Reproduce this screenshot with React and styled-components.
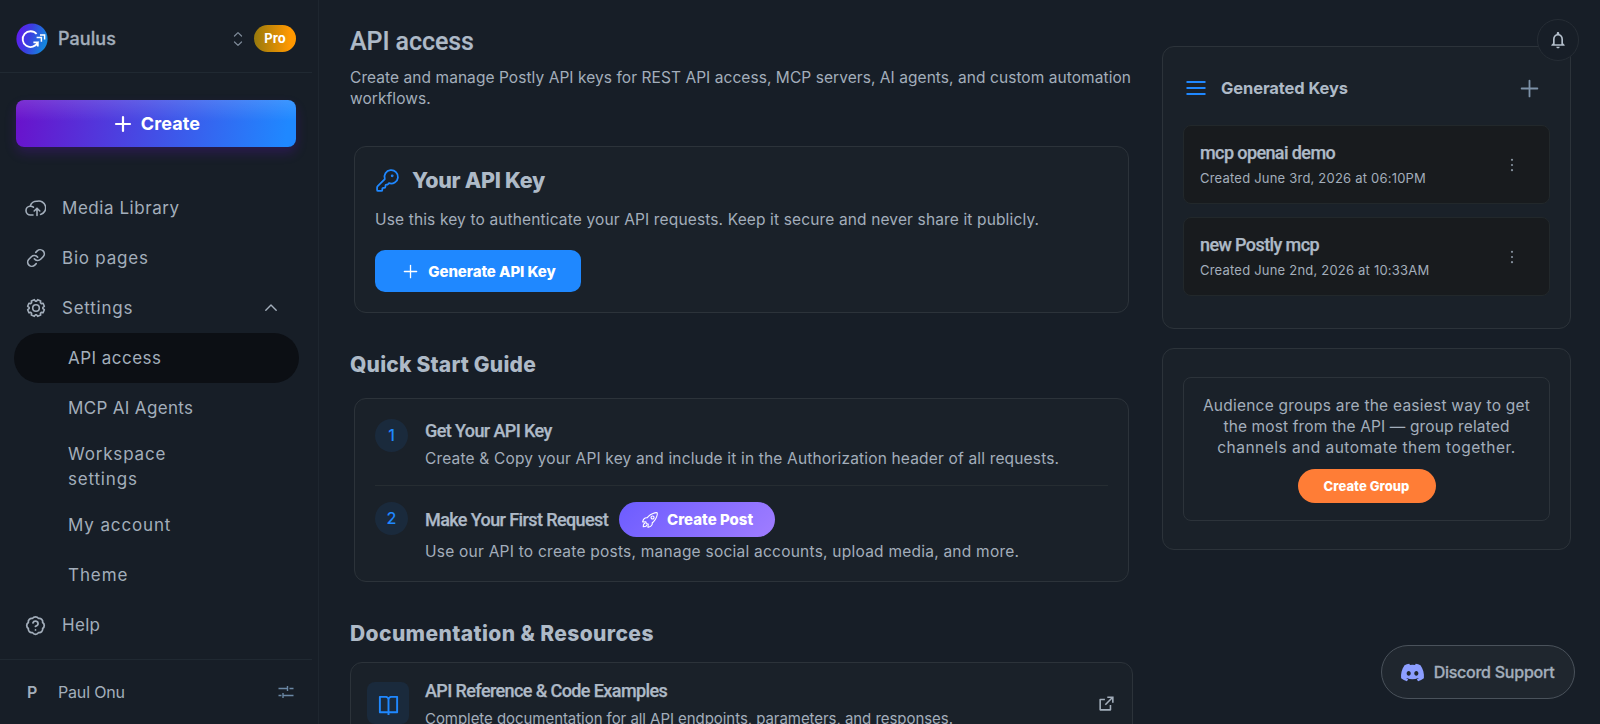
import React from 'react';
import styled, { createGlobalStyle, css } from 'styled-components';
import { Link, BadgeQuestionMark, KeyRound, Plus } from 'lucide-react';
import { IoRocketOutline } from 'react-icons/io5';
import { MdNotificationsNone } from 'react-icons/md';
import { RiBookOpenLine, RiExternalLinkLine } from 'react-icons/ri';
import { FaDiscord } from 'react-icons/fa';

const keys = [
    { name: 'mcp openai demo', created: 'Created June 3rd, 2026 at 06:10PM' },
    { name: 'new Postly mcp', created: 'Created June 2nd, 2026 at 10:33AM' },
];

const settingsLinks = [
    { label: 'API access', track: 0.47, active: true },
    { label: 'MCP AI Agents', track: 0.34 },
    { label: 'Workspace settings', track: 0.82, tall: true },
    { label: 'My account', track: 0.87 },
    { label: 'Theme', track: 0.92 },
];

// eight teeth, with a notch at the top
const gearPoints = [];
for (let i = 0; i < 8; i++) {
    [[-17, 6.9], [-11, 8.5], [11, 8.5], [17, 6.9]].forEach(([offset, r]) => {
        const a = (22.5 + i * 45 + offset) * Math.PI / 180;
        gearPoints.push(`${(10 + r * Math.sin(a)).toFixed(2)},${(10 - r * Math.cos(a)).toFixed(2)}`);
    });
}

const Logo = () => (
    <svg width="32" height="32" viewBox="0 0 32 32" fill="none">
        <defs>
            <linearGradient id="logo" x1="0" y1="0" x2="1" y2="0.3">
                <stop offset="0" stopColor="#6a12f2" />
                <stop offset="0.5" stopColor="#3a3fe0" />
                <stop offset="1" stopColor="#1584dc" />
            </linearGradient>
        </defs>
        <circle cx="16" cy="16" r="15.6" fill="url(#logo)" />
        <path d="M20.6 11A7.9 7.9 0 1 0 21.8 19.4H17.4M21.8 18.6v5" stroke="#fff" strokeWidth="1.8" />
        <path d="M24 12h4.6v4.6M20.6 14.4h4.8v4.4" stroke="#fff" strokeWidth="1.5" />
    </svg>
)

const Chevrons = () => (
    <svg width="10" height="16" viewBox="0 0 10 16" fill="none" stroke="#7d8997" strokeWidth="1.3" strokeLinecap="round" strokeLinejoin="round">
        <path d="M1.5 5 5 1.6 8.5 5M1.5 11 5 14.4 8.5 11" />
    </svg>
)

const ChevronUp = () => (
    <svg width="14" height="10" viewBox="0 0 14 10" fill="none" stroke="#a3aebb" strokeWidth="1.4" strokeLinecap="round" strokeLinejoin="round">
        <path d="M1.8 7.2 7 2 12.2 7.2" />
    </svg>
)

const CloudIcon = () => (
    <svg width="21" height="17" viewBox="0 0 21 17" fill="none" stroke="currentColor" strokeWidth="1.6" strokeLinecap="round" strokeLinejoin="round">
        <path d="M8 15H5.6A4.4 4.4 0 0 1 5.2 6.2 4.4 4.4 0 0 1 8.4 7.2" />
        <path d="M5.2 6.2A6.7 6.7 0 0 1 12.2 1.3 6.7 6.7 0 0 1 15.6 14.4" />
        <path d="M12 15.4V8.6M9.2 11 12 8.2 14.8 11" />
    </svg>
)

const GearIcon = () => (
    <svg width="20" height="20" viewBox="0 0 20 20" fill="none" stroke="currentColor" strokeWidth="1.6" strokeLinejoin="round">
        <polygon points={gearPoints.join(' ')} />
        <circle cx="10" cy="10" r="3.3" />
    </svg>
)

const Sliders = () => (
    <svg width="16" height="14" viewBox="0 0 16 14" fill="none" stroke="#6b88a5" strokeWidth="1.4">
        <path d="M0.5 3.5H9.5M9.5 1v5M11.5 3.5h4M0.5 10.5h3M5 8v5M5 10.5h10.5" />
    </svg>
)

const Bars = () => (
    <svg width="20" height="16" viewBox="0 0 20 16" stroke="#1f88ff" strokeWidth="1.8">
        <path d="M0.5 2h19M0.5 8h19M0.5 14h19" />
    </svg>
)

const Dots = () => (
    <svg width="4" height="14" viewBox="0 0 4 14" fill="#8793a0">
        <circle cx="2" cy="1.8" r="1.1" />
        <circle cx="2" cy="7" r="1.1" />
        <circle cx="2" cy="12.2" r="1.1" />
    </svg>
)

const Sidebar = () => (
    <SidebarContainer>
        <Workspace>
            <Logo />
            <WorkspaceName>Paulus</WorkspaceName>
            <Chevrons />
            <ProBadge>Pro</ProBadge>
        </Workspace>

        <CreateButton>
            <Plus size={24} strokeWidth={2.2} />
            Create
        </CreateButton>

        <Nav>
            <NavRow $track={0.55}><NavIcon><CloudIcon /></NavIcon>Media Library</NavRow>
            <NavRow $track={0.79}><NavIcon><Link size={20} strokeWidth={2} /></NavIcon>Bio pages</NavRow>
            <NavRow $track={0.77}>
                <NavIcon><GearIcon /></NavIcon>
                <NavLabel>Settings</NavLabel>
                <ChevronUp />
            </NavRow>

            {settingsLinks.map(link => (
                <SubRow key={link.label} $track={link.track} $active={link.active} $tall={link.tall}>
                    <SubLabel>{link.label}</SubLabel>
                </SubRow>
            ))}

            <NavRow $track={0.31}><NavIcon><BadgeQuestionMark size={21} strokeWidth={2} /></NavIcon>Help</NavRow>
        </Nav>

        <UserRow>
            <UserInitial>P</UserInitial>
            <UserName>Paul Onu</UserName>
            <Sliders />
        </UserRow>
    </SidebarContainer>
)

const Content = () => (
    <ContentContainer>
        <PageTitle>API access</PageTitle>
        <PageIntro $track={0.061}>
            Create and manage Postly API keys for REST API access, MCP servers, AI agents, and custom automation workflows.
        </PageIntro>

        <KeyCard>
            <CardHeading>
                <KeyRound size={25} strokeWidth={1.7} color="#1f88ff" />
                <CardTitle>Your API Key</CardTitle>
            </CardHeading>
            <Text $track={0.141}>
                Use this key to authenticate your API requests. Keep it secure and never share it publicly.
            </Text>
            <GenerateButton>
                <Plus size={21} strokeWidth={1.5} />
                Generate API Key
            </GenerateButton>
        </KeyCard>

        <SectionTitle $track={0.2}>Quick Start Guide</SectionTitle>

        <StepsCard>
            <Step>
                <StepNumber>1</StepNumber>
                <StepBody>
                    <StepHead>
                        <ItemTitle>Get Your API Key</ItemTitle>
                    </StepHead>
                    <Text $track={0.168}>
                        Create & Copy your API key and include it in the Authorization header of all requests.
                    </Text>
                </StepBody>
            </Step>
            <Step $last>
                <StepNumber>2</StepNumber>
                <StepBody>
                    <StepHead $tall>
                        <ItemTitle>Make Your First Request</ItemTitle>
                        <PostButton>
                            <IoRocketOutline size={18} />
                            Create Post
                        </PostButton>
                    </StepHead>
                    <Text $track={0.235}>
                        Use our API to create posts, manage social accounts, upload media, and more.
                    </Text>
                </StepBody>
            </Step>
        </StepsCard>

        <SectionTitle $track={0.4}>Documentation & Resources</SectionTitle>

        <DocCard>
            <DocIcon><RiBookOpenLine size={23} /></DocIcon>
            <DocBody>
                <ItemTitle>API Reference & Code Examples</ItemTitle>
                <DocText>Complete documentation for all API endpoints, parameters, and responses.</DocText>
            </DocBody>
            <DocLink><RiExternalLinkLine size={19} /></DocLink>
        </DocCard>
    </ContentContainer>
)

const Aside = () => (
    <AsideContainer>
        <KeysPanel>
            <PanelHeader>
                <Bars />
                <PanelTitle>Generated Keys</PanelTitle>
                <Plus size={27} strokeWidth={1.6} />
            </PanelHeader>
            {keys.map(key => (
                <KeyItem key={key.name}>
                    <KeyInfo>
                        <ItemTitle>{key.name}</ItemTitle>
                        <KeyDate>{key.created}</KeyDate>
                    </KeyInfo>
                    <Dots />
                </KeyItem>
            ))}
        </KeysPanel>

        <GroupPanel>
            <GroupBox>
                <GroupLine $track={0.236}>Audience groups are the easiest way to get</GroupLine>
                <GroupLine $track={0.134}>the most from the API — group related</GroupLine>
                <GroupLine $track={0.476}>channels and automate them together.</GroupLine>
                <GroupButton>Create Group</GroupButton>
            </GroupBox>
        </GroupPanel>
    </AsideContainer>
)

export default function App() {
    return (
        <>
            <GlobalStyle />
            <Page>
                <Sidebar />
                <Content />
                <Aside />
                <BellButton><MdNotificationsNone size={20} /></BellButton>
                <DiscordButton>
                    <FaDiscord size={25} color="#8c9eff" />
                    Discord Support
                </DiscordButton>
            </Page>
        </>
    )
}

const GlobalStyle = createGlobalStyle`
    * {
        box-sizing: border-box;
    }
    body {
        margin: 0;
        overflow: hidden;
        background-color: #171e27;
    }
    button {
        border: 0;
        font-family: inherit;
        color: white;
        display: flex;
        align-items: center;
        justify-content: center;
        padding: 0;
    }
    svg {
        flex-shrink: 0;
    }
`
const tracked = css`
    letter-spacing: ${p => p.$track || 0}px;
`
const cardBox = css`
    background-color: #1a2129;
    border: 1px solid #2c333a;
    border-radius: 12px;
`
const Page = styled.div`
    position: relative;
    display: flex;
    width: 1600px;
    height: 724px;
    overflow: hidden;
    font-family: Inter, sans-serif;
    color: #a3aebb;
`

/* sidebar */
const SidebarContainer = styled.aside`
    display: flex;
    flex-direction: column;
    width: 319px;
    flex-shrink: 0;
    padding-right: 6px;
    border-right: 1px solid #1e262f;
`
const Workspace = styled.div`
    display: flex;
    align-items: center;
    height: 73px;
    padding: 5px 16px 0 16px;
    border-bottom: 1px solid #202932;
`
const WorkspaceName = styled.div`
    flex-grow: 1;
    padding-left: 10px;
    font-size: 18px;
    font-weight: 500;
    letter-spacing: 0.08px;
    -webkit-text-stroke: 0.3px;
`
const ProBadge = styled.span`
    width: 42px;
    margin-left: 11px;
    border-radius: 14px;
    background: linear-gradient(90deg, #96790d, #ff9800 85%);
    color: white;
    font-size: 13px;
    font-weight: 700;
    line-height: 27px;
    text-align: center;
`
const CreateButton = styled.button`
    height: 47px;
    margin: 27px 16px 36px 16px;
    gap: 6px;
    padding-right: 1px;
    flex-shrink: 0;
    border-radius: 8px;
    background: linear-gradient(180deg, rgba(255, 255, 255, 0.13), rgba(255, 255, 255, 0) 45%),
        linear-gradient(100deg, #6a11cb, #1f88ff 96%);
    box-shadow: 0 6px 12px rgba(106, 17, 203, 0.24);
    font-size: 18px;
    font-weight: 700;
    letter-spacing: 0.1px;
`
const Nav = styled.nav`
    display: flex;
    flex-direction: column;
    flex-grow: 1;
    padding-left: 14px;
    font-size: 17px;
`
const NavRow = styled.div`
    display: flex;
    align-items: center;
    height: 50px;
    padding-right: 34px;
    ${tracked}
`
const NavIcon = styled.span`
    display: flex;
    justify-content: center;
    width: 43px;
    margin-right: 5px;
`
const NavLabel = styled.span`
    flex-grow: 1;
`
const SubRow = styled.div`
    display: flex;
    align-items: center;
    width: 285px;
    height: ${p => p.$tall ? 67 : 50}px;
    padding-left: 54px;
    border-radius: 25px;
    background-color: ${p => p.$active ? '#0c0f14' : 'transparent'};
    line-height: 25px;
    ${tracked}
`
const SubLabel = styled.span`
    max-width: 130px;
`
const UserRow = styled.div`
    display: flex;
    align-items: center;
    height: 65px;
    padding: 0 18px 0 27px;
    border-top: 1px solid #202932;
`
const UserInitial = styled.span`
    width: 31px;
    font-size: 16px;
    font-weight: 600;
`
const UserName = styled.span`
    flex-grow: 1;
    font-size: 16px;
    letter-spacing: -0.17px;
`

/* main column */
const ContentContainer = styled.main`
    width: 783px;
    flex-shrink: 0;
    margin-left: 31px;
    padding-top: 27px;
`
const PageTitle = styled.h1`
    margin: 0;
    color: #aebac7;
    font-family: Roboto, sans-serif;
    font-size: 25px;
    font-weight: 500;
    line-height: 30px;
    letter-spacing: -0.06px;
    -webkit-text-stroke: 0.2px;
`
const Text = styled.p`
    margin: 0;
    font-size: 15.5px;
    line-height: 21px;
    ${tracked}
`
const PageIntro = styled(Text)`
    margin-top: 10px;
`
const KeyCard = styled.section`
    ${cardBox}
    height: 167px;
    margin: 37px 4px 0 4px;
    padding: 20px;
`
const CardHeading = styled.div`
    display: flex;
    align-items: center;
    gap: 12px;
    height: 26px;
    margin-bottom: 16px;
`
const CardTitle = styled.h2`
    margin: 0;
    color: #aebac7;
    font-size: 21.5px;
    font-weight: 800;
    line-height: 26px;
    letter-spacing: -0.3px;
`
const GenerateButton = styled.button`
    width: 206px;
    height: 42px;
    margin-top: 20px;
    gap: 7px;
    border-radius: 10px;
    background-color: #1f88ff;
    font-size: 15px;
    font-weight: 800;
    letter-spacing: -0.1px;
`
const SectionTitle = styled.h2`
    margin: 39px 0 0 0;
    color: #aebac7;
    font-size: 21px;
    font-weight: 800;
    line-height: 26px;
    ${tracked}
`
const StepsCard = styled.section`
    ${cardBox}
    height: 184px;
    margin: 20px 4px 0 4px;
    padding: 20px;
`
const Step = styled.div`
    display: flex;
    gap: 17px;
    ${p => p.$last ? 'padding-top: 16px;' : 'padding-bottom: 16px; border-bottom: 1px solid #262d32;'}
`
const StepNumber = styled.span`
    width: 33px;
    height: 33px;
    border-radius: 50%;
    background-color: #1a2a3c;
    color: #1f88ff;
    font-size: 16px;
    font-weight: 500;
    line-height: 33px;
    text-align: center;
`
const StepBody = styled.div``
const StepHead = styled.div`
    display: flex;
    align-items: center;
    gap: 11px;
    height: ${p => p.$tall ? 35 : 23}px;
    margin-bottom: ${p => p.$tall ? 4 : 6}px;
`
const ItemTitle = styled.h3`
    margin: 0;
    color: #aebac7;
    font-family: Roboto, sans-serif;
    font-size: 18px;
    font-weight: 500;
    line-height: 22px;
    letter-spacing: -0.6px;
    -webkit-text-stroke: 0.25px;
`
const PostButton = styled.button`
    width: 156px;
    height: 35px;
    gap: 8px;
    border-radius: 18px;
    background: linear-gradient(135deg, #6c5cff, #a07dff);
    font-size: 15px;
    font-weight: 800;
    letter-spacing: 0;
`
const DocCard = styled.section`
    ${cardBox}
    display: flex;
    align-items: flex-start;
    margin-top: 15px;
    padding: 17px 16px;
    height: 86px;
`
const DocIcon = styled.span`
    display: flex;
    align-items: center;
    justify-content: center;
    width: 42px;
    height: 42px;
    margin-top: 2px;
    padding-top: 2px;
    border-radius: 8px;
    background-color: #1a2a3c;
    color: #1f88ff;
`
const DocBody = styled.div`
    flex-grow: 1;
    padding-left: 16px;
`
const DocText = styled(Text)`
    margin-top: 6px;
    font-size: 15px;
    letter-spacing: -0.05px;
`
const DocLink = styled.span`
    display: flex;
    margin-top: 14px;
`

/* right column */
const AsideContainer = styled.aside`
    display: flex;
    flex-direction: column;
    gap: 19px;
    width: 409px;
    flex-shrink: 0;
    margin-left: 29px;
    padding-top: 46px;
`
const KeysPanel = styled.section`
    ${cardBox}
    height: 283px;
    padding: 19px 20px;
`
const PanelHeader = styled.div`
    display: flex;
    align-items: center;
    height: 44px;
    margin-bottom: 15px;
    padding: 0 7px 0 3px;
    color: #7d92a8;
`
const PanelTitle = styled.h2`
    flex-grow: 1;
    margin: 0;
    padding-left: 15px;
    color: #aebac7;
    font-size: 16.5px;
    font-weight: 700;
    letter-spacing: -0.1px;
`
const KeyItem = styled.div`
    display: flex;
    align-items: center;
    justify-content: space-between;
    height: 79px;
    margin-bottom: 13px;
    padding: 0 35px 0 16px;
    border: 1px solid #22282b;
    border-radius: 8px;
    background-color: #181b1e;
`
const KeyInfo = styled.div`
    padding-bottom: 1px;
`
const KeyDate = styled.div`
    margin-top: 5px;
    font-size: 13px;
    line-height: 18px;
    letter-spacing: 0.21px;
`
const GroupPanel = styled.section`
    ${cardBox}
    height: 202px;
    padding: 28px 20px;
`
const GroupBox = styled.div`
    display: flex;
    flex-direction: column;
    align-items: center;
    height: 144px;
    padding-top: 17px;
    border: 1px solid #2c333a;
    border-radius: 8px;
`
const GroupLine = styled(Text)`
    white-space: nowrap;
`
const GroupButton = styled.button`
    width: 138px;
    height: 34px;
    margin-top: 11px;
    border-radius: 17px;
    background-color: #ff7d36;
    font-size: 13px;
    font-weight: 800;
    letter-spacing: 0.05px;
`

/* floating buttons */
const BellButton = styled.button`
    position: absolute;
    top: 19px;
    right: 21px;
    width: 42px;
    height: 42px;
    border: 1px solid #262d35;
    border-radius: 50%;
    background-color: #171e27;
    color: #b4bfcb;
`
const DiscordButton = styled.button`
    position: absolute;
    right: 25px;
    bottom: 25px;
    width: 194px;
    height: 54px;
    gap: 9px;
    padding-right: 2px;
    border: 1px solid #4a525b;
    border-radius: 27px;
    background-color: #1f262e;
    color: #a3aebb;
    font-size: 16px;
    font-weight: 500;
    letter-spacing: -0.25px;
    -webkit-text-stroke: 0.3px;
`
